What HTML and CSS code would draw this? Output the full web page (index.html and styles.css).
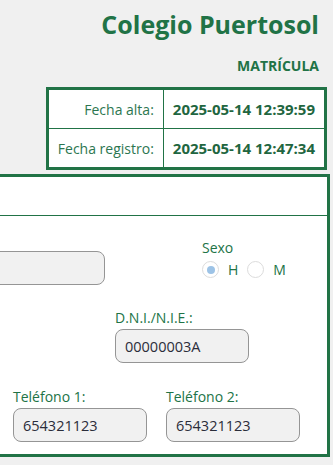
FILE: index.html
```html
<!DOCTYPE html>
<html lang="es">
<head>
    <meta charset="UTF-8">
    <meta name="viewport" content="width=device-width, initial-scale=1.0">
    <title>Matrícula - Colegio Puertosol</title>
    <link rel="stylesheet" href="styles.css">
</head>
<body>
    <div class="page">
        <h1 class="school">Colegio Puertosol</h1>
        <h2 class="section">MATRÍCULA</h2>

        <table class="dates">
            <tr>
                <td class="dates-label">Fecha alta:</td>
                <td class="dates-value">2025-05-14 12:39:59</td>
            </tr>
            <tr>
                <td class="dates-label">Fecha registro:</td>
                <td class="dates-value">2025-05-14 12:47:34</td>
            </tr>
        </table>

        <form class="card">
            <div class="card-head"></div>
            <div class="card-body">
                <div class="row row-name">
                    <div class="field field-name">
                        <span class="label-space"></span>
                        <input type="text" class="input input-name" value="" readonly aria-label="Nombre">
                    </div>
                    <div class="sexo">
                        <span class="sexo-title">Sexo</span>
                        <div class="sexo-options">
                            <span class="radio checked"></span><span class="radio-text">H</span>
                            <span class="radio"></span><span class="radio-text">M</span>
                        </div>
                    </div>
                </div>
                <div class="row row-dni">
                    <div class="field">
                        <label>D.N.I./N.I.E.:</label>
                        <input type="text" class="input" value="00000003A" readonly>
                    </div>
                </div>
                <div class="row row-phone">
                    <div class="field">
                        <label>Teléfono 1:</label>
                        <input type="text" class="input" value="654321123" readonly>
                    </div>
                    <div class="field">
                        <label>Teléfono 2:</label>
                        <input type="text" class="input" value="654321123" readonly>
                    </div>
                </div>
            </div>
        </form>
    </div>
</body>
</html>
```

FILE: styles.css
```css
body {
    margin: 0;
    padding: 0;
    background-color: #f0f0f0;
    font-family: 'Open Sans', 'Noto Sans', sans-serif;
    color: #217346;
    overflow: hidden;
}
.page {
    display: flex;
    flex-direction: column;
    align-items: flex-end;
    padding-right: 3px;
}
.school {
    margin: 5px 11px 0 0;
    font-size: 25px;
    line-height: 38px;
    font-weight: 700;
    color: #217346;
}
.section {
    margin: 13px 11px 0 0;
    font-size: 14px;
    line-height: 20px;
    font-weight: 700;
    color: #217346;
}

/* Fechas */
.dates {
    margin: 11px 3px 0 0;
    border-collapse: collapse;
    border: 3px solid #217346;
    background-color: #fff;
    width: 280px;
}
.dates td {
    border: 1px solid #217346;
    height: 38px;
    padding: 0 9px;
    white-space: nowrap;
}
.dates-label {
    width: 96px;
    text-align: right;
    font-size: 14px;
    color: #2c7650;
}
.dates-value {
    font-size: 15px;
    font-weight: 700;
    color: #1f6640;
}

/* Ficha */
.card {
    margin: 4px 0 0 0;
    width: 474px;
    flex-shrink: 0;
    background-color: #fff;
    border: 3px solid #217346;
}
.card-head {
    height: 38px;
    border-bottom: 1px solid #217346;
}
.card-body {
    padding: 16px 20px 12px 7px;
}
.row {
    display: flex;
    align-items: flex-start;
}
.row-dni {
    margin-top: 23px;
    padding-left: 255px;
}
.row-phone {
    margin-top: 24px;
    padding-left: 153px;
    gap: 19px;
}
.field {
    display: flex;
    flex-direction: column;
}
.field label,
.label-space {
    display: block;
    font-size: 14px;
    line-height: 19px;
    height: 19px;
}
.field label {
    margin-bottom: 2px;
}
.input {
    box-sizing: border-box;
    width: 134px;
    height: 34px;
    margin: 0;
    padding: 0 9px;
    border: 1px solid #959595;
    border-radius: 8px;
    background-color: #f1f1f1;
    font-family: 'Open Sans', 'Noto Sans', sans-serif;
    font-size: 14.5px;
    color: #2b2d3a;
    outline: none;
}
.input-name {
    width: 245px;
}

/* Sexo */
.sexo {
    margin: 6px 0 0 97px;
}
.sexo-title {
    display: block;
    font-size: 14px;
    line-height: 19px;
}
.sexo-options {
    display: flex;
    align-items: center;
    margin-top: 3px;
}
.radio {
    box-sizing: border-box;
    width: 17px;
    height: 17px;
    border: 1px solid #dcdcdc;
    border-radius: 50%;
    background-color: #fff;
    display: flex;
    align-items: center;
    justify-content: center;
}
.radio.checked::after {
    content: "";
    width: 8px;
    height: 8px;
    border-radius: 50%;
    background-color: #9dc3e6;
}
.radio-text {
    font-size: 14px;
    margin: 0 9px;
}
```
